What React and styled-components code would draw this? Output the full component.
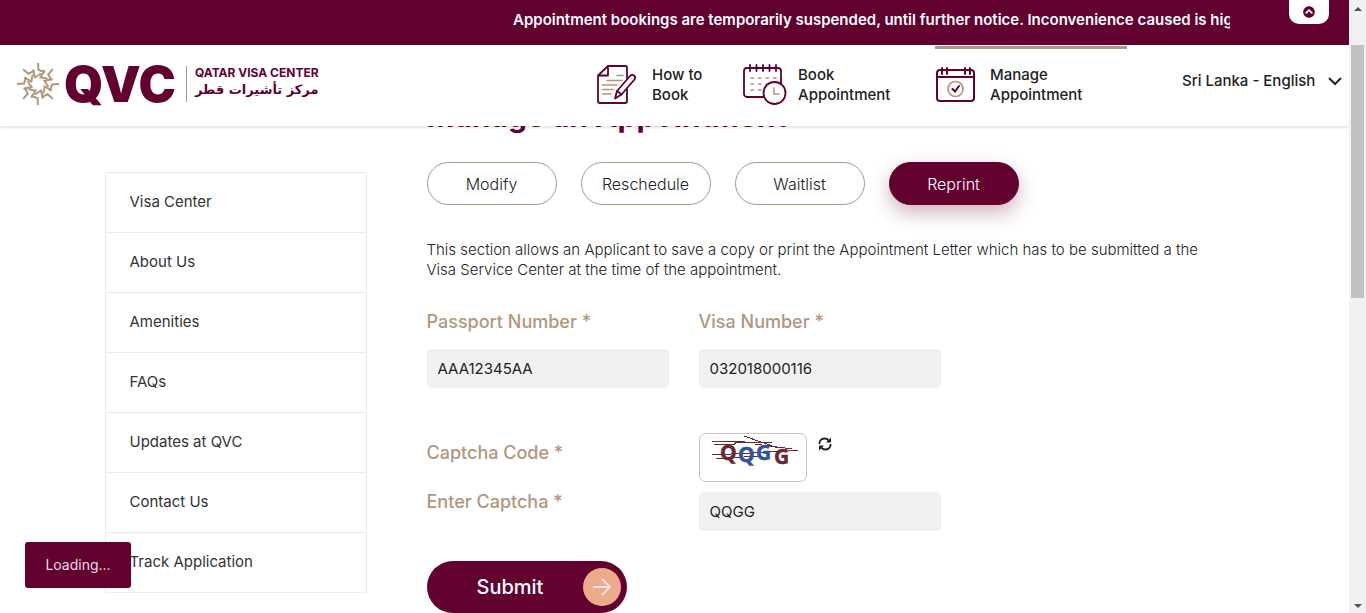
import React from "react";
import styled, { createGlobalStyle } from "styled-components";
import { FaChevronCircleUp } from "react-icons/fa";

const maroon = "#62002f";
const sand = "#b3967e";

const GlobalStyle = createGlobalStyle`
  * { box-sizing: border-box; }
  body {
    margin: 0;
    background: #fff;
    color: #222;
    font-family: Inter, "Liberation Sans", sans-serif;
  }
  button, input, select { font-family: inherit; color: inherit; }
`;

const Shell = styled.div`
  display: flex;
  height: 100vh;
  overflow: hidden;
`;

const Page = styled.div`
  flex: 1;
  min-width: 0;
  overflow: hidden;
`;

const NoticeBar = styled.div`
  position: relative;
  display: flex;
  justify-content: flex-end;
  height: 45px;
  padding: 10px 119px 0 0;
  background: ${maroon};
`;

const Notice = styled.p`
  width: 717px;
  margin: 0;
  overflow: hidden;
  white-space: nowrap;
  color: #fff;
  font-size: 15px;
  font-weight: 600;
  line-height: 20px;
`;

const CollapseButton = styled.button`
  position: absolute;
  top: 0;
  right: 20px;
  display: flex;
  align-items: center;
  justify-content: center;
  width: 40px;
  height: 24px;
  padding: 0;
  border: 0;
  border-radius: 0 0 10px 10px;
  background: #fff;
  color: ${maroon};
`;

const Header = styled.header`
  position: relative;
  z-index: 2;
  display: flex;
  align-items: stretch;
  height: 81px;
  padding: 0 7px 0 16px;
  background: #fff;
  box-shadow: 0 1px 4px rgba(0, 0, 0, 0.16);
`;

const Logo = styled.a`
  display: flex;
  align-items: center;
  height: 78px;
  color: ${maroon};
  text-decoration: none;
`;

const LogoLetters = styled.span`
  margin-left: 4px;
  font-size: 50px;
  font-weight: 900;
  line-height: 48px;
`;

const LogoNames = styled.span`
  display: flex;
  flex-direction: column;
  height: 36px;
  margin-left: 10px;
  padding-left: 8px;
  border-left: 1px solid ${sand};
  font-size: 12px;
  font-weight: 700;
  line-height: 13px;
`;

const ArabicName = styled.span`
  align-self: flex-start;
  font-family: "DejaVu Sans", sans-serif;
  font-size: 13px;
  font-weight: 700;
  line-height: 22px;
`;

const Nav = styled.nav`
  display: flex;
  margin-left: auto;
`;

const NavLink = styled.a`
  display: flex;
  align-items: center;
  gap: 10px;
  width: ${(p) => (p.$narrow ? 146 : 192)}px;
  margin-top: 1px;
  padding-bottom: 6px;
  border-top: 3px solid ${(p) => (p.$active ? sand : "transparent")};
  color: #222;
  font-size: 15px;
  font-weight: 500;
  line-height: 20px;
  text-decoration: none;
  svg { flex: none; }
`;

const NavText = styled.span`
  width: min-content;
  min-width: ${(p) => (p.$narrow ? 56 : 0)}px;
`;

const Language = styled.label`
  display: grid;
  align-items: center;
  width: 160px;
  margin-left: 55px;
  padding-bottom: 9px;
  > * { grid-area: 1 / 1; }
  svg { justify-self: end; pointer-events: none; }
`;

const LanguageSelect = styled.select`
  appearance: none;
  width: 100%;
  padding: 0;
  border: 0;
  background: transparent;
  font-size: 15px;
  font-weight: 500;
  line-height: 20px;
`;

const Main = styled.main`
  display: flex;
  align-items: flex-start;
  gap: 60px;
  max-width: 1140px;
  margin: -28px auto 0;
`;

const SideMenu = styled.nav`
  flex: none;
  width: 262px;
  margin-top: 74px;
  border: 1px solid #ececec;
  border-bottom: 0;
`;

const SideLink = styled.a`
  display: block;
  height: 60px;
  padding: 19px 24px;
  border-bottom: 1px solid #ececec;
  color: #333;
  font-size: 15px;
  line-height: 20px;
  text-decoration: none;
`;

const Content = styled.section`
  flex: 1;
  min-width: 0;
`;

const Title = styled.h1`
  margin: 0;
  color: ${maroon};
  font-size: 30px;
  font-weight: 700;
  line-height: 36px;
`;

const Tabs = styled.div`
  display: flex;
  gap: 24px;
  margin-top: 28px;
`;

const Tab = styled.button`
  width: 130px;
  height: 43px;
  padding: 0;
  border: 1px solid ${(p) => (p.$active ? maroon : sand)};
  border-radius: 22px;
  background: ${(p) => (p.$active ? maroon : "#fff")};
  box-shadow: ${(p) => (p.$active ? "0 8px 20px rgba(98, 0, 47, 0.3)" : "none")};
  color: ${(p) => (p.$active ? "#fff" : "#222")};
  font-size: 16px;
  font-weight: 300;
`;

const Intro = styled.p`
  margin: 35px 30px 0 0;
  font-size: 15px;
  font-weight: 300;
  line-height: 20px;
`;

const Form = styled.form`
  margin-top: 32px;
`;

const FieldRow = styled.div`
  display: flex;
  gap: 30px;
`;

const Field = styled.div`
  display: flex;
  flex-direction: column;
  gap: 17px;
  width: 242px;
`;

const labelText = `
  color: ${sand};
  font-size: 18px;
  font-weight: 500;
  line-height: 20px;
`;

const Label = styled.label`${labelText}`;
const Caption = styled.span`${labelText}`;

const TextInput = styled.input`
  width: 242px;
  height: 39px;
  padding: 0 11px;
  border: 0;
  border-radius: 4px;
  background: #f1f1f1;
  color: #222;
  font-size: 15px;
`;

const CaptchaGrid = styled.div`
  display: grid;
  grid-template-columns: 242px 242px;
  gap: 10px 30px;
  margin-top: 45px;
  ${Caption} { margin-top: 10px; }
`;

const CaptchaRow = styled.div`
  display: flex;
  align-items: flex-start;
  gap: 11px;
`;

const CaptchaBox = styled.div`
  width: 108px;
  height: 49px;
  border: 1px solid #c4c4c4;
  border-radius: 7px;
  svg { display: block; }
`;

const RefreshButton = styled.button`
  display: flex;
  margin-top: 4px;
  padding: 0;
  border: 0;
  background: none;
`;

const SubmitButton = styled.button`
  display: flex;
  align-items: center;
  width: 200px;
  height: 52px;
  margin-top: 30px;
  padding: 0 6px 0 50px;
  border: 0;
  border-radius: 26px;
  background: ${maroon};
  color: #fff;
  font-size: 20px;
  font-weight: 500;
`;

const ArrowDisc = styled.span`
  display: flex;
  align-items: center;
  justify-content: center;
  width: 38px;
  height: 38px;
  margin-left: auto;
  border-radius: 50%;
  background: #edab8c;
`;

const LoadingToast = styled.div`
  position: fixed;
  left: 25px;
  bottom: 25px;
  z-index: 3;
  width: 106px;
  height: 46px;
  border-radius: 3px;
  background: ${maroon};
  color: #eadbe2;
  font-size: 14px;
  line-height: 46px;
  text-align: center;
`;

const ScrollTrack = styled.div`
  display: flex;
  flex: none;
  flex-direction: column;
  align-items: center;
  width: 17px;
  padding: 7px 0 5px;
  background: #f1f1f1;
`;

const ScrollArrow = styled.span`
  border: 4px solid transparent;
  border-top-width: ${(p) => (p.$down ? 4 : 0)}px;
  border-bottom-width: ${(p) => (p.$down ? 0 : 4)}px;
  border-${(p) => (p.$down ? "top" : "bottom")}-color: #505050;
  margin-top: ${(p) => (p.$down ? "auto" : 0)};
`;

const ScrollThumb = styled.div`
  width: 13px;
  height: 253px;
  margin-top: 34px;
  background: #c1c1c1;
`;

function Emblem() {
  return (
    <svg width="44" height="44" viewBox="-22 -22 44 44" fill="none" stroke={sand} strokeWidth="2" aria-hidden="true">
      {[0, 45, 90, 135, 180, 225, 270, 315].map((a) => (
        <g key={a} transform={`rotate(${a})`}>
          <path d="M0-21L.5-14L7-12" />
          <path d="M-5-14.500L-3-6.500L3-10.500" />
        </g>
      ))}
    </svg>
  );
}

function GuideIcon() {
  return (
    <svg width="45" height="42" viewBox="0 0 45 42" fill="none" stroke={maroon} strokeWidth="1.8" strokeLinejoin="round" strokeLinecap="round" aria-hidden="true">
      <path d="M30 14V3.500Q30 2 28.500 2H11L1 11.500V37Q1 39 3 39H28Q30 39 30 37V25M11 2V11.500H1" />
      <path d="M20 11.500H26M10 16.500H25M5.500 21H20M5.500 25.500H16M5.500 30H14" stroke={sand} strokeWidth="1.600" />
      <path d="M18 34.500L20 27L33 12Q35 10 37 11.500Q39 13.500 37.500 15.500L24.500 30.500Z" fill="#fff" />
      <path d="M20 27L24.500 30.500" />
    </svg>
  );
}

function BookIcon() {
  return (
    <svg width="45" height="42" viewBox="0 0 45 42" fill="none" stroke={maroon} strokeWidth="1.8" strokeLinecap="round" aria-hidden="true">
      <rect x="1" y="4" width="37" height="29" rx="3" />
      <path d="M7 1V7M13.500 1V7M20 1V7M26.500 1V7M33 1V7" />
      <path d="M8 14H34M8 20H26M8 26H20" stroke={sand} strokeWidth="1.600" strokeDasharray="2.500 5" />
      <circle cx="31.500" cy="29" r="11" fill="#fff" />
      <path d="M31 24V30H36" stroke={sand} strokeWidth="1.600" />
    </svg>
  );
}

function ManageIcon() {
  return (
    <svg width="45" height="42" viewBox="0 0 45 42" fill="none" stroke={maroon} strokeWidth="2" strokeLinecap="round" aria-hidden="true">
      <rect x="2" y="6" width="37" height="31" rx="3" />
      <path d="M2 13H39M7 4V10M12 4V10M30 4V10M35 4V10" />
      <circle cx="20.500" cy="25" r="7.500" stroke={sand} strokeWidth="1.700" />
      <path d="M17.500 25L20 27.500L24 22" />
    </svg>
  );
}

function RefreshIcon() {
  return (
    <svg width="14" height="14" viewBox="0 0 14 14" fill="none" stroke="#222" strokeWidth="1.800" aria-hidden="true">
      <path d="M1.500 7V5.500Q2.500 1.500 7 1.500Q9.500 1.500 11 4M12.500 7V8.500Q11.500 12.500 7 12.500Q4.500 12.500 3 10" />
      <path d="M8 5.500L13 .5V5.500ZM6 8.500H1V13.500Z" fill="#222" stroke="none" />
    </svg>
  );
}

function CaptchaPicture() {
  return (
    <svg width="106" height="47" viewBox="0 0 106 47" fontFamily="Open Sans, sans-serif" fontSize="21" fontWeight="700" role="img" aria-label="Captcha">
      <g stroke="#6b2832" shapeRendering="crispEdges" fill="none">
        <path d="M12 7.500H45M14 10.500L34 10.500L36 8.500L72 8.500M44 2L78 14M12 21L98 16.500M16 24.500L62 22M55 10L92 15" />
      </g>
      <g fill="#6b2832" stroke="#6b2832" strokeWidth="0.500">
        <text x="20" y="26">Q</text>
        <text x="74" y="30">G</text>
      </g>
      <g fill="#30559a" stroke="#30559a" strokeWidth="0.500">
        <text x="38" y="28">Q</text>
        <text x="56" y="26">G</text>
      </g>
    </svg>
  );
}

const menu = ["Visa Center", "About Us", "Amenities", "FAQs", "Updates at QVC", "Contact Us", "Track Application"];
const tabs = ["Modify", "Reschedule", "Waitlist", "Reprint"];

export default function App() {
  return (
    <Shell>
      <GlobalStyle />
      <Page>
        <NoticeBar>
          <Notice>Appointment bookings are temporarily suspended, until further notice. Inconvenience caused is highly regretted.</Notice>
          <CollapseButton aria-label="Collapse notice"><FaChevronCircleUp size={12} /></CollapseButton>
        </NoticeBar>
        <Header>
          <Logo href="#">
            <Emblem />
            <LogoLetters>QVC</LogoLetters>
            <LogoNames>
              QATAR VISA CENTER
              <ArabicName lang="ar" dir="rtl">مركز تأشيرات قطر</ArabicName>
            </LogoNames>
          </Logo>
          <Nav>
            <NavLink href="#" $narrow><GuideIcon /><NavText $narrow>How to Book</NavText></NavLink>
            <NavLink href="#"><BookIcon /><NavText>Book Appointment</NavText></NavLink>
            <NavLink href="#" $active><ManageIcon /><NavText>Manage Appointment</NavText></NavLink>
          </Nav>
          <Language>
            <LanguageSelect aria-label="Country and language">
              <option>Sri Lanka - English</option>
            </LanguageSelect>
            <svg width="14" height="9" viewBox="0 0 14 9" fill="none" stroke="#222" strokeWidth="2" aria-hidden="true">
              <path d="M1 1L7 7L13 1" />
            </svg>
          </Language>
        </Header>
        <Main>
          <SideMenu>
            {menu.map((item) => <SideLink href="#" key={item}>{item}</SideLink>)}
          </SideMenu>
          <Content>
            <Title>Manage an Appointment</Title>
            <Tabs>
              {tabs.map((tab) => <Tab type="button" key={tab} $active={tab === "Reprint"}>{tab}</Tab>)}
            </Tabs>
            <Intro>
              This section allows an Applicant to save a copy or print the Appointment Letter which has to be submitted a the Visa Service Center at the time of the appointment.
            </Intro>
            <Form>
              <FieldRow>
                <Field>
                  <Label htmlFor="passport">Passport Number *</Label>
                  <TextInput id="passport" defaultValue="AAA12345AA" />
                </Field>
                <Field>
                  <Label htmlFor="visa">Visa Number *</Label>
                  <TextInput id="visa" defaultValue="032018000116" />
                </Field>
              </FieldRow>
              <CaptchaGrid>
                <Caption>Captcha Code *</Caption>
                <CaptchaRow>
                  <CaptchaBox><CaptchaPicture /></CaptchaBox>
                  <RefreshButton type="button" aria-label="Refresh captcha"><RefreshIcon /></RefreshButton>
                </CaptchaRow>
                <Label htmlFor="captcha">Enter Captcha *</Label>
                <TextInput id="captcha" defaultValue="QQGG" />
              </CaptchaGrid>
              <SubmitButton type="button">
                Submit
                <ArrowDisc>
                  <svg width="18" height="18" viewBox="0 0 18 18" fill="none" stroke="#f7e6e4" strokeWidth="1.800" aria-hidden="true">
                    <path d="M0 9H17M9 1L17 9L9 17" />
                  </svg>
                </ArrowDisc>
              </SubmitButton>
            </Form>
          </Content>
        </Main>
      </Page>
      <ScrollTrack aria-hidden="true">
        <ScrollArrow />
        <ScrollThumb />
        <ScrollArrow $down />
      </ScrollTrack>
      <LoadingToast role="status">Loading...</LoadingToast>
    </Shell>
  );
}
